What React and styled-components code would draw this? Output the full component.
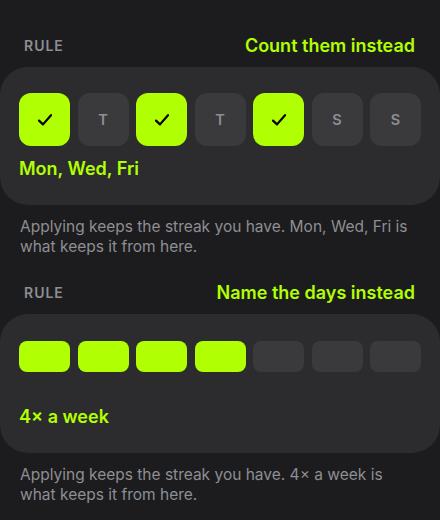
import styled, { createGlobalStyle } from "styled-components"

const Global = createGlobalStyle`
  body {
    margin: 0;
    background: #1c1c1e;
    font-family: Inter, "Noto Sans", "Liberation Sans", sans-serif;
    -webkit-font-smoothing: antialiased;
  }
`

const LIME = "#b1ff03"

const days = [
  { l: "M", on: true },
  { l: "T", on: false },
  { l: "W", on: true },
  { l: "T", on: false },
  { l: "F", on: true },
  { l: "S", on: false },
  { l: "S", on: false },
]

function Check() {
  return (
    <svg width="18" height="18" viewBox="0 0 18 18" fill="none">
      <path d="M3 9.6 L7 13.4 L15 4.2" stroke="#000" strokeWidth="2.2" strokeLinecap="round" strokeLinejoin="round" />
    </svg>
  )
}

export default function App() {
  return (
    <Page>
      <Global />
      <Header first>
        <Tag>RULE</Tag>
        <Switch>Count them instead</Switch>
      </Header>
      <Card top={26}>
        <Row>
          {days.map((d, i) => (
            <Day key={i} on={d.on}>{d.on ? <Check /> : d.l}</Day>
          ))}
        </Row>
        <Label>Mon, Wed, Fri</Label>
      </Card>
      <Caption>Applying keeps the streak you have. Mon, Wed, Fri is what keeps it from here.</Caption>

      <Header>
        <Tag>RULE</Tag>
        <Switch>Name the days instead</Switch>
      </Header>
      <Card top={27}>
        <Row>
          {[0, 1, 2, 3, 4, 5, 6].map(i => (
            <Bar key={i} on={i < 4} />
          ))}
        </Row>
        <Label>4× a week</Label>
      </Card>
      <Caption>Applying keeps the streak you have. 4× a week is what keeps it from here.</Caption>
    </Page>
  )
}

const Page = styled.div`
  width: 440px;
  min-height: 520px;
  display: flex;
  flex-direction: column;
`

const Header = styled.div`
  height: 22px;
  margin-top: ${props => props.first ? "34px" : "25px"};
  padding: 0 25px 0 24px;
  display: flex;
  align-items: center;
  justify-content: space-between;
`

const Tag = styled.span`
  color: #8e8e93;
  font-size: 14px;
  font-weight: 600;
  letter-spacing: 1px;
`

const Switch = styled.span`
  color: ${LIME};
  font-size: 18px;
  font-weight: 600;
`

const Card = styled.div`
  margin-top: 11px;
  background: #2c2c2e;
  border-radius: 28px;
  padding: ${props => props.top}px 19px 25px;
  display: flex;
  flex-direction: column;
  gap: 12px;
`

const Row = styled.div`
  height: 53px;
  display: grid;
  grid-template-columns: repeat(7, 1fr);
  gap: 7.5px;
  align-items: start;
`

const Day = styled.div`
  height: 53px;
  border-radius: 12px;
  background: ${props => props.on ? LIME : "#3a3a3c"};
  color: #8e8e93;
  font-size: 14.5px;
  font-weight: 600;
  display: flex;
  align-items: center;
  justify-content: center;
`

const Bar = styled.div`
  height: 31px;
  border-radius: 8px;
  background: ${props => props.on ? LIME : "#3a3a3c"};
`

const Label = styled.div`
  color: ${LIME};
  font-size: 18px;
  font-weight: 600;
  line-height: 22px;
`

const Caption = styled.p`
  margin: 12px 0 0;
  padding: 0 28px 0 20px;
  color: #8e8e93;
  font-size: 15.5px;
  line-height: 19.5px;
`
